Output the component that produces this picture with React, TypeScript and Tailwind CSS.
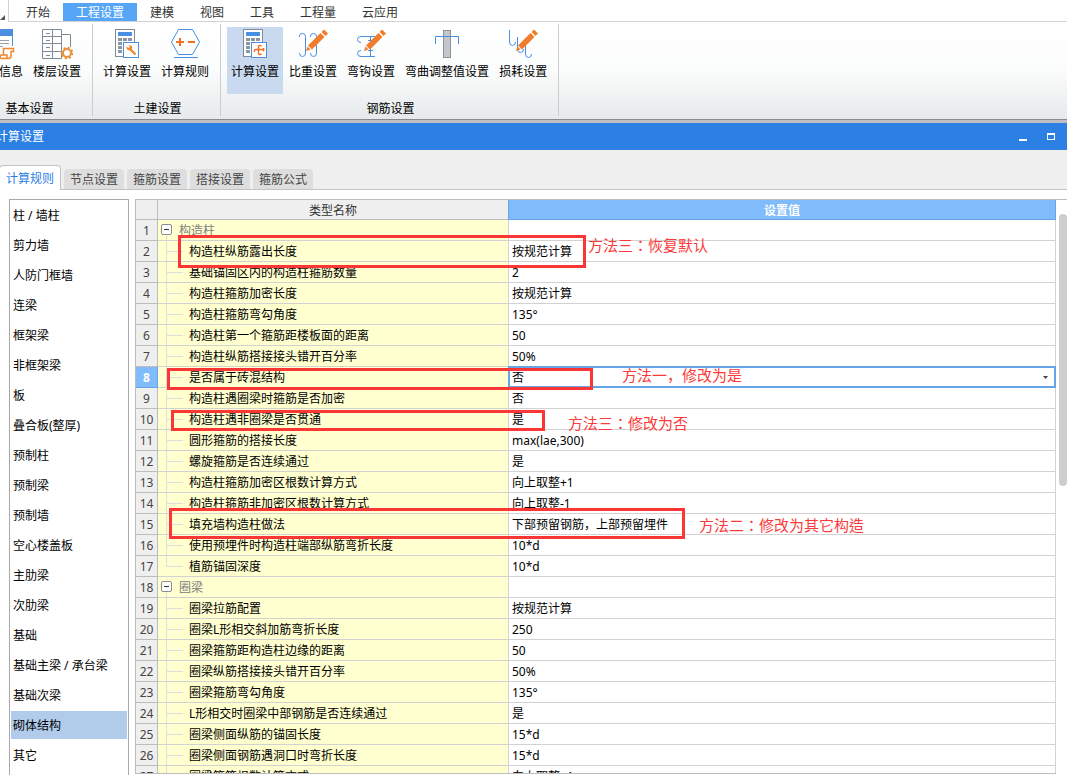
import { useState, type ReactNode } from 'react';

const menus = ['开始', '工程设置', '建模', '视图', '工具', '工程量', '云应用'];

const tabs = ['计算规则', '节点设置', '箍筋设置', '搭接设置', '箍筋公式'];

const categories = [
  '柱 / 墙柱', '剪力墙', '人防门框墙', '连梁', '框架梁', '非框架梁', '板', '叠合板(整厚)', '预制柱', '预制梁',
  '预制墙', '空心楼盖板', '主肋梁', '次肋梁', '基础', '基础主梁 / 承台梁', '基础次梁', '砌体结构', '其它',
];

interface Row {
  name: string;
  value?: string;
  group?: boolean;
  last?: boolean;
  options?: string[];
}

const rows: Row[] = [
  { name: '构造柱', group: true },
  { name: '构造柱纵筋露出长度', value: '按规范计算' },
  { name: '基础锚固区内的构造柱箍筋数量', value: '2' },
  { name: '构造柱箍筋加密长度', value: '按规范计算' },
  { name: '构造柱箍筋弯勾角度', value: '135°' },
  { name: '构造柱第一个箍筋距楼板面的距离', value: '50' },
  { name: '构造柱纵筋搭接接头错开百分率', value: '50%' },
  { name: '是否属于砖混结构', value: '否', options: ['否', '是'] },
  { name: '构造柱遇圈梁时箍筋是否加密', value: '否' },
  { name: '构造柱遇非圈梁是否贯通', value: '是' },
  { name: '圆形箍筋的搭接长度', value: 'max(lae,300)' },
  { name: '螺旋箍筋是否连续通过', value: '是' },
  { name: '构造柱箍筋加密区根数计算方式', value: '向上取整+1' },
  { name: '构造柱箍筋非加密区根数计算方式', value: '向上取整-1' },
  { name: '填充墙构造柱做法', value: '下部预留钢筋，上部预留埋件' },
  { name: '使用预埋件时构造柱端部纵筋弯折长度', value: '10*d' },
  { name: '植筋锚固深度', value: '10*d', last: true },
  { name: '圈梁', group: true },
  { name: '圈梁拉筋配置', value: '按规范计算' },
  { name: '圈梁L形相交斜加筋弯折长度', value: '250' },
  { name: '圈梁箍筋距构造柱边缘的距离', value: '50' },
  { name: '圈梁纵筋搭接接头错开百分率', value: '50%' },
  { name: '圈梁箍筋弯勾角度', value: '135°' },
  { name: 'L形相交时圈梁中部钢筋是否连续通过', value: '是' },
  { name: '圈梁侧面纵筋的锚固长度', value: '15*d' },
  { name: '圈梁侧面钢筋遇洞口时弯折长度', value: '15*d' },
  { name: '圈梁箍筋根数计算方式', value: '向上取整+1' },
];

/* Ribbon icons */

function Icon({ children }: { children: ReactNode }) {
  return (
    <svg width="32" height="32" viewBox="0 0 32 32" fill="none" className="shrink-0" aria-hidden="true">
      {children}
    </svg>
  );
}

function Pencil() {
  return (
    <g fill="#f07d2c">
      <path d="M9 23 L10.5 18.5 L13.5 21.5 Z" />
      <path d="M11 17.5 L23.5 5 L27.5 9 L15 21.5 Z" />
      <path d="M24.5 4 L27 1.5 L31 5.5 L28.5 8 Z" />
    </g>
  );
}

function Calculator({ children }: { children: ReactNode }) {
  return (
    <Icon>
      <rect x="4.5" y="1.5" width="19" height="27" fill="#fff" stroke="#7f8b95" />
      <rect x="7" y="4" width="14" height="4" fill="#4a8fe2" />
      {[10, 14, 18, 22].map((y) =>
        [7, 12, 17].map((x) => <rect key={`${x}-${y}`} x={x} y={y} width="4" height="3" fill="#8d979f" />)
      )}
      <rect x="12.5" y="14.5" width="15" height="15" fill="#fff" stroke="#4a8fe2" />
      {children}
    </Icon>
  );
}

const icons: Record<string, ReactNode> = {
  info: (
    <Icon>
      <path d="M1.5 1.5 H29.5 V18 M1.5 1.5 V29.5 H16" fill="none" stroke="#4a8fe2" />
      <rect x="1" y="1" width="29" height="7" fill="#4a8fe2" />
      <path d="M5 12.5 H26 M5 15.5 H26 M5 18.5 H20" stroke="#9aa3ab" />
      <path d="M20.5 27 V20.5 H30.5 V23.5 H28 V28 Q28 30.5 25.5 30.5 H18 Q16.5 27.5 18 27 H24 V30" stroke="#f0882c" strokeWidth="1.5" />
    </Icon>
  ),
  floor: (
    <Icon>
      <path d="M1.5 1.5 H20.5 V30.5 H1.5 Z M11.5 1.5 V30.5 M1.5 8.5 H20.5 M1.5 15.5 H20.5 M1.5 23.5 H20.5 M20.5 6.5 H29.5 V19" stroke="#7f8b95" />
      <path d="M5 5.5 H9 M5 12.5 H9 M5 19.5 H9 M5 27.5 H9" stroke="#7f8b95" />
      <circle cx="26" cy="25" r="4" fill="#fff" stroke="#e8913a" strokeWidth="2" />
      <circle cx="26" cy="25" r="5.4" stroke="#e8913a" strokeWidth="1.8" strokeDasharray="2.1 2.14" />
    </Icon>
  ),
  calcWrench: (
    <Calculator>
      <path d="M19 21 L24.5 26.5" stroke="#f0882c" strokeWidth="2.4" />
      <path d="M17.5 17 L19 18.5 L17.5 20 L15.5 18.5 Q15 22 18.5 22.5 Q22 21 21 18.5 Q19.5 16.5 17.5 17 Z" fill="#f0882c" />
    </Calculator>
  ),
  hexagon: (
    <Icon>
      <path d="M9.5 1.5 H23.5 L30.5 14 L23.5 26.5 H9.5 L2.5 14 Z M5 29.5 H29" stroke="#4a8fe2" />
      <path d="M7 14 H15 M11 10 V18 M19 14 H26" stroke="#f37021" strokeWidth="2" />
    </Icon>
  ),
  calcRebar: (
    <Calculator>
      <path d="M22.5 18 Q19.5 16.5 19.5 19 V25 Q19.5 27.5 22.5 26 M25.5 21.5 H17 Q15 21.5 15.5 24 M24.5 20 V23.5" stroke="#f37021" strokeWidth="1.5" />
    </Calculator>
  ),
  weight: (
    <Icon>
      <path d="M2.5 9 V8 Q2.5 5.5 5.5 5.5 Q8.5 5.5 8.5 8.5 V25 Q8.5 28.5 5.5 28.5 Q2.5 28.5 2.5 25" stroke="#4a8fe2" />
      <path d="M13.5 9 V8 Q13.5 5.5 16.5 5.5 Q19.5 5.5 19.5 8.5 V25 Q19.5 28.5 16.5 28.5 Q13.5 28.5 13.5 25" stroke="#4a8fe2" />
      <Pencil />
    </Icon>
  ),
  hook: (
    <Icon>
      <path d="M20 8.5 H6 Q2.5 8.5 2.5 11.5 Q2.5 14.5 6 14.5 M20 28.5 H6 Q2.5 28.5 2.5 25.5 Q2.5 22.5 6 22.5" stroke="#4a8fe2" />
      <path d="M15.5 8 V28 M13 12.5 H18 M13 16.5 H18 M13 22.5 H18" stroke="#4a8fe2" />
      <Pencil />
    </Icon>
  ),
  bend: (
    <Icon>
      <rect x="12.5" y="2.5" width="7" height="27" fill="#c3c7ca" stroke="#8b949b" />
      <path d="M4.5 16 V8.5 H27.5 V16" stroke="#4a8fe2" />
    </Icon>
  ),
  loss: (
    <Icon>
      <path d="M2.5 2 V14 Q2.5 17.5 5.5 17.5 Q8.5 17.5 8.5 14 M10.5 9 V21 Q10.5 24.5 13.5 24.5 Q16.5 24.5 16.5 21 M18.5 14 V26 Q18.5 29.5 21.5 29.5 Q24.5 29.5 24.5 26" stroke="#4a8fe2" />
      <Pencil />
    </Icon>
  ),
};

const ribbonGroups = [
  {
    title: '基本设置',
    items: [
      { label: '工程信息', icon: 'info' },
      { label: '楼层设置', icon: 'floor' },
    ],
  },
  {
    title: '土建设置',
    items: [
      { label: '计算设置', icon: 'calcWrench' },
      { label: '计算规则', icon: 'hexagon' },
    ],
  },
  {
    title: '钢筋设置',
    items: [
      { label: '计算设置', icon: 'calcRebar', active: true },
      { label: '比重设置', icon: 'weight' },
      { label: '弯钩设置', icon: 'hook' },
      { label: '弯曲调整值设置', icon: 'bend' },
      { label: '损耗设置', icon: 'loss' },
    ],
  },
];

function NameCell({ row }: { row: Row }) {
  if (row.group) {
    return (
      <div className="flex h-5 items-center">
        <div className="ml-[3px] flex h-5 w-[11px] flex-col items-center pt-1">
          <button aria-label="折叠" className="flex h-[11px] w-[11px] shrink-0 items-center justify-center rounded-xs border border-[#8c8c8c] bg-white">
            <span className="h-px w-[5px] bg-[#333]" />
          </button>
          <span className="w-px flex-1 bg-[#dedede]" />
        </div>
        <span className="ml-[7px] pt-0.5 text-[#808080]">{row.name}</span>
      </div>
    );
  }
  return (
    <div className="flex h-5 items-center">
      <div className="ml-2 flex w-[17px] flex-col self-stretch">
        <div className="h-[11px] border-b border-l border-[#dedede]" />
        {!row.last && <div className="-mb-px flex-1 border-l border-[#dedede]" />}
      </div>
      <span className="ml-1.5 pt-0.5 whitespace-nowrap">{row.name}</span>
    </div>
  );
}

export default function App() {
  const [menu, setMenu] = useState('工程设置');
  const [tab, setTab] = useState('计算规则');
  const [category, setCategory] = useState('砌体结构');

  return (
    <div className="flex h-screen flex-col overflow-hidden bg-white font-['Noto_Sans','Noto_Sans_CJK_SC',sans-serif] text-[12px] leading-4 text-black">
      {/* Menu bar */}
      <header className="flex h-[22px] shrink-0">
        <div className="flex w-2 items-end pb-0.5">
          <svg width="5" height="5" aria-hidden="true">
            <path d="M5 0 V5 H0 Z" fill="#555" />
          </svg>
        </div>
        <nav className="flex flex-1 items-end border-b border-l border-[#d2d2d2] pl-1">
          {menus.map((m) => (
            <button
              key={m}
              onClick={() => setMenu(m)}
              className={`h-[18px] px-[13px] pt-0.5 whitespace-nowrap ${m === menu ? 'bg-[#57a5f7] text-white' : 'text-[#333]'}`}
            >
              {m}
            </button>
          ))}
        </nav>
      </header>

      {/* Ribbon */}
      <div className="flex h-[97px] shrink-0 bg-linear-to-b from-white via-[#fbfcfc] to-[#e6eaeb] pt-0.5 pb-[3px]">
        {ribbonGroups.map((g, i) => (
          <section
            key={g.title}
            className={`flex shrink-0 flex-col border-r border-[#cbcdcf] pt-[3px] pr-[7px] pl-1.5 ${i === 0 ? '-ml-[35px]' : ''}`}
          >
            <div className="flex gap-0.5">
              {g.items.map((item) => (
                <button
                  key={item.label}
                  className={`flex h-[67px] flex-col items-center px-1 pt-px whitespace-nowrap ${'active' in item ? 'bg-[#c9d9ef]' : ''}`}
                >
                  {icons[item.icon]}
                  <span className="mt-1">{item.label}</span>
                </button>
              ))}
            </div>
            <h2 className="mt-[7px] pl-[3px] text-center">{g.title}</h2>
          </section>
        ))}
      </div>
      <div className="h-1 shrink-0 border-t border-[#868a90] bg-[#bcbec1]" />

      {/* Dialog title */}
      <div className="flex h-[27px] shrink-0 items-center justify-between bg-[#2c80e3] text-white">
        <h1 className="-ml-1">计算设置</h1>
        <div className="flex gap-5 pr-3">
          <button aria-label="最小化" className="flex h-2 w-2 items-end">
            <span className="h-0.5 w-2 bg-white" />
          </button>
          <button aria-label="最大化" className="h-[7px] w-2 border border-t-2 border-white" />
        </div>
      </div>

      {/* Tabs */}
      <div className="flex h-10 shrink-0 items-end gap-[3px] border-b border-[#c3c3c3] bg-[#efefef]">
        {tabs.map((t) => (
          <button
            key={t}
            onClick={() => setTab(t)}
            className={
              t === tab
                ? '-mb-px -ml-px h-[25px] rounded-t-sm border border-b-0 border-[#c3c3c3] bg-white px-1.5 pt-0.5 whitespace-nowrap text-[#2b80e2]'
                : 'h-5 rounded-t-sm bg-[#dedede] px-1.5 pt-0.5 whitespace-nowrap text-[#444]'
            }
          >
            {t}
          </button>
        ))}
      </div>

      <main className="flex min-h-0 flex-1 pt-[9px] pl-[9px]">
        {/* Component list */}
        <ul className="w-[120px] shrink-0 overflow-hidden border border-b-0 border-[#a9a9a9] px-px">
          {categories.map((c) => (
            <li key={c} className="py-px">
              <button
                onClick={() => setCategory(c)}
                className={`h-7 w-full pt-0.5 pl-0.5 text-left ${c === category ? 'bg-[#b1cbeb]' : ''}`}
              >
                {c}
              </button>
            </li>
          ))}
        </ul>

        {/* Settings grid */}
        <div className="relative mb-px ml-1.5 min-w-0 flex-1 overflow-hidden border-b border-[#bdbdbd]">
          <table className="w-full table-fixed border-separate border-spacing-0 border-t border-l border-[#bdbdbd]">
            <colgroup>
              <col className="w-[22px]" />
              <col className="w-[350px]" />
              <col />
            </colgroup>
            <thead>
              <tr className="h-5">
                <th className="border-r border-b border-[#bdbdbd] bg-[#efefef] p-0" />
                <th className="border-b border-[#bdbdbd] bg-[#efefef] p-0 pt-0.5 font-normal text-[#333]">类型名称</th>
                <th className="border border-t-0 border-[#64a5e8] bg-[#80bbfb] p-0 pt-0.5 text-white">设置值</th>
              </tr>
            </thead>
            <tbody>
              {rows.map((row, i) => (
                <tr key={row.name} className="h-[21px]">
                  <th
                    scope="row"
                    className={`border-r border-b p-0 pt-0.5 text-center ${
                      row.options ? 'border-[#64a5e8] bg-[#80bbfb] text-white' : 'border-[#bdbdbd] bg-[#efefef] font-normal text-[#444]'
                    }`}
                  >
                    {i + 1}
                  </th>
                  <td className="overflow-hidden border-b border-[#d2d2d2] bg-[#ffffcf] p-0">
                    <NameCell row={row} />
                  </td>
                  <td className="relative border-r border-b border-l border-[#d2d2d2] p-0 pt-0.5 pl-[3px]">
                    {row.options ? (
                      <div className="absolute -inset-px flex items-center border-2 border-[#64a5e8] bg-white">
                        <select aria-label={row.name} defaultValue={row.value} className="w-full appearance-none pt-0.5 pl-0.5 outline-none">
                          {row.options.map((o) => (
                            <option key={o}>{o}</option>
                          ))}
                        </select>
                        <svg width="5" height="3" className="mr-1.5 shrink-0" aria-hidden="true">
                          <path d="M0 0 H5 L2.5 3 Z" fill="#444" />
                        </svg>
                      </div>
                    ) : (
                      row.value
                    )}
                  </td>
                </tr>
              ))}
            </tbody>
          </table>

          {/* Markup drawn over the grid */}
          <div className="pointer-events-none text-[15px] leading-5 whitespace-nowrap text-[#fc3a3a]">
            <div className="absolute top-[36px] left-[43px] h-[33px] w-[408px] border-3 border-[#fc3535]" />
            <div className="absolute top-[169px] left-[32px] h-[22px] w-[426px] border-3 border-[#fc3535]" />
            <div className="absolute top-[211px] left-[36px] h-[21px] w-[374px] border-3 border-[#fc3535]" />
            <div className="absolute top-[309px] left-[34px] h-[31px] w-[516px] border-3 border-[#fc3535]" />
            <p className="absolute top-[36px] left-[453px] font-['Noto_Sans_CJK_TC',sans-serif]">方法三：恢复默认</p>
            <p className="absolute top-[166px] left-[487px] font-['Noto_Sans_CJK_SC',sans-serif]">方法一，修改为是</p>
            <p className="absolute top-[214px] left-[433px] font-['Noto_Sans_CJK_TC',sans-serif]">方法三：修改为否</p>
            <p className="absolute top-[316px] left-[564px] font-['Noto_Sans_CJK_TC',sans-serif]">方法二：修改为其它构造</p>
          </div>
        </div>

        {/* Scrollbar */}
        <div className="w-[11px] shrink-0 border-t border-[#bdbdbd] pt-[14px] pl-[3px]">
          <div className="h-[272px] rounded-full bg-[#cdcdcd]" />
        </div>
      </main>
    </div>
  );
}
